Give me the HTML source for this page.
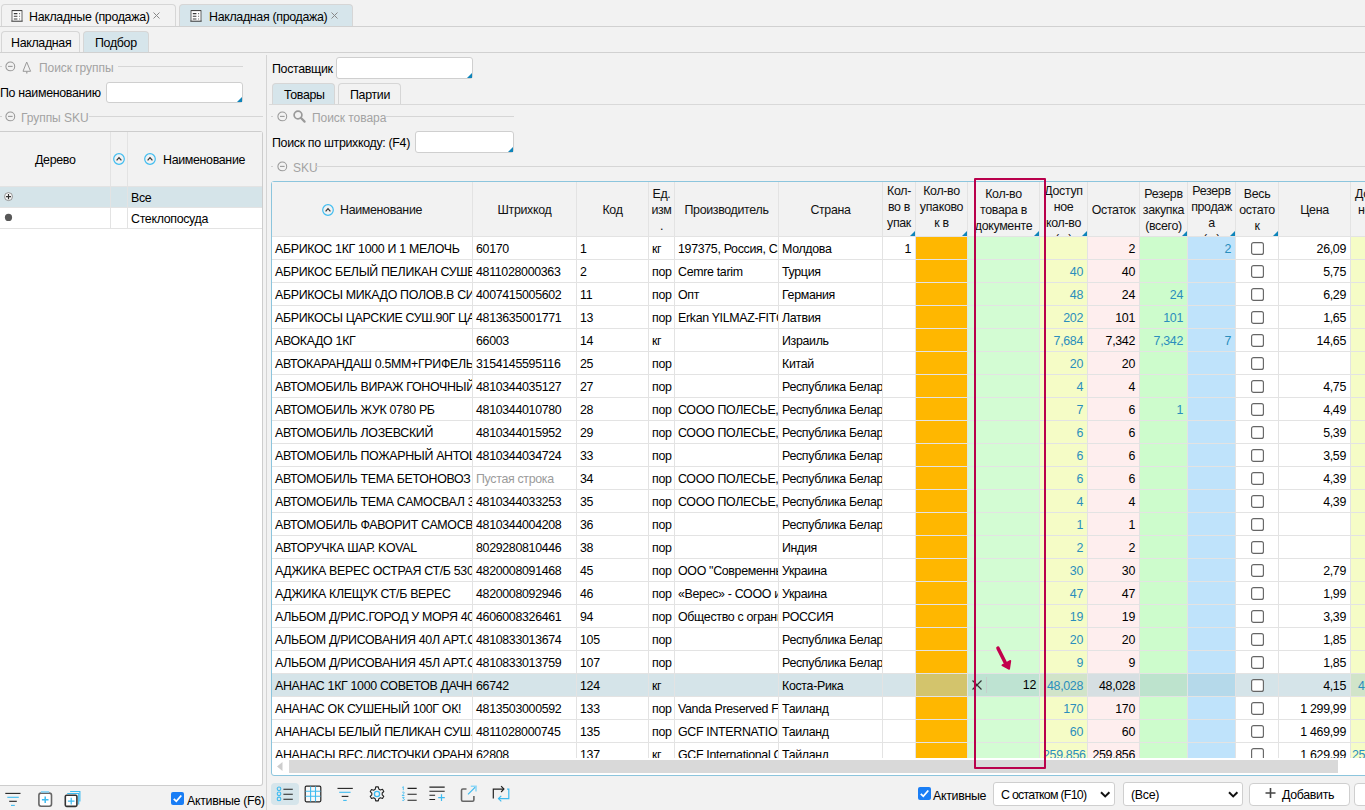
<!DOCTYPE html><html><head><meta charset="utf-8"><style>
html,body{margin:0;padding:0}
body{width:1365px;height:810px;overflow:hidden;position:relative;background:#f2f2f2;font-family:"Liberation Sans",sans-serif;font-size:12.4px;letter-spacing:-0.32px;color:#000}
.a{position:absolute;box-sizing:border-box}
.t{white-space:nowrap;line-height:16px}
.c{overflow:hidden;white-space:nowrap;line-height:22px;padding:1px 3px 0 3px}
.r{text-align:right;padding-right:4px}
.g{color:#9b9b9b}
.tm{color:#2a8ebd}
svg{position:absolute;overflow:visible}
</style></head><body>
<div class="a" style="left:1px;top:4px;width:175px;height:23px;border:1px solid #d6d6d6;border-bottom:none;border-radius:4px 4px 0 0;background:#f2f2f2"></div>
<svg style="left:11px;top:10px" width="12" height="12" viewBox="0 0 12 12"><path d="M1 11V0.5H11V11" fill="#fff" stroke="#555" stroke-width="0.9"/><path d="M0.3 11.2h11.4" stroke="#333" stroke-width="1"/><path d="M0.8 0.6h10.4" stroke="#444" stroke-width="1"/><path d="M2.8 3.6h3.6M2.8 6.3h3.6M2.8 9h3.6" stroke="#3a3a3a" stroke-width="1.1"/><path d="M8.1 3.6h1M8.1 6.3h1M8.1 9h1" stroke="#666" stroke-width="1.1"/></svg>
<div class="a t" style="left:29px;top:9px;">Накладные (продажа)</div>
<svg style="left:153px;top:12px" width="7" height="7" viewBox="0 0 7 7"><path d="M0.5 0.5L6.5 6.5M6.5 0.5L0.5 6.5" stroke="#888" stroke-width="1"/></svg>
<div class="a" style="left:179px;top:4px;width:174px;height:23px;border:1px solid #d6d6d6;border-bottom:none;border-radius:4px 4px 0 0;background:#d6e5eb"></div>
<svg style="left:190px;top:10px" width="12" height="12" viewBox="0 0 12 12"><path d="M1 11V0.5H11V11" fill="#fff" stroke="#555" stroke-width="0.9"/><path d="M0.3 11.2h11.4" stroke="#333" stroke-width="1"/><path d="M0.8 0.6h10.4" stroke="#444" stroke-width="1"/><path d="M2.8 3.6h3.6M2.8 6.3h3.6M2.8 9h3.6" stroke="#3a3a3a" stroke-width="1.1"/><path d="M8.1 3.6h1M8.1 6.3h1M8.1 9h1" stroke="#666" stroke-width="1.1"/></svg>
<div class="a t" style="left:209px;top:9px;">Накладная (продажа)</div>
<svg style="left:331px;top:12px" width="7" height="7" viewBox="0 0 7 7"><path d="M0.5 0.5L6.5 6.5M6.5 0.5L0.5 6.5" stroke="#888" stroke-width="1"/></svg>
<div class="a" style="left:0px;top:26px;width:1365px;height:1px;background:#d1d1d1"></div>
<div class="a" style="left:1px;top:31px;width:79px;height:22px;border:1px solid #d6d6d6;border-bottom:none;border-radius:4px 4px 0 0;background:#f2f2f2"></div>
<div class="a t" style="left:11px;top:35px;">Накладная</div>
<div class="a" style="left:83px;top:31px;width:66px;height:22px;border:1px solid #d6d6d6;border-bottom:none;border-radius:4px 4px 0 0;background:#d6e5eb"></div>
<div class="a t" style="left:95px;top:35px;">Подбор</div>
<div class="a" style="left:0px;top:52px;width:1365px;height:1px;background:#d1d1d1"></div>
<div class="a" style="left:266px;top:55px;width:1px;height:755px;background:#d4d4d4"></div>
<div class="a" style="left:0px;top:66px;width:2px;height:1px;background:#cfcfcf"></div>
<svg style="left:5px;top:61px" width="11" height="11" viewBox="0 0 11 11"><circle cx="5.3" cy="5.4" r="4.4" fill="none" stroke="#999" stroke-width="1.05"/><path d="M3 5.4h4.6" stroke="#999" stroke-width="1.1"/></svg>
<svg style="left:22px;top:61px" width="10" height="13" viewBox="0 0 10 13"><path d="M4.7 1L1 10.3H8.6Z" fill="none" stroke="#9a9a9a" stroke-width="1" stroke-linejoin="round"/><path d="M4.8 10.5V12.6" stroke="#9a9a9a" stroke-width="1.2"/></svg>
<div class="a t" style="left:39px;top:60px;color:#a3a3a3;font-size:12px;letter-spacing:-0.05px">Поиск группы</div>
<div class="a" style="left:118px;top:66px;width:125px;height:1px;background:#d6d6d6"></div>
<div class="a t" style="left:0px;top:85px;">По наименованию</div>
<div class="a" style="left:106px;top:82px;width:137px;height:21px;background:#fff;border:1px solid #cfcfcf;border-radius:3px"></div>
<svg style="left:237px;top:97px" width="5" height="5" viewBox="0 0 5 5"><path d="M5 0L5 5L0 5Z" fill="#0e84ba"/></svg>
<div class="a" style="left:0px;top:116px;width:2px;height:1px;background:#cfcfcf"></div>
<svg style="left:5px;top:111px" width="11" height="11" viewBox="0 0 11 11"><circle cx="5.3" cy="5.4" r="4.4" fill="none" stroke="#999" stroke-width="1.05"/><path d="M3 5.4h4.6" stroke="#999" stroke-width="1.1"/></svg>
<div class="a t" style="left:21px;top:110px;color:#a3a3a3;font-size:12px;letter-spacing:-0.05px">Группы SKU</div>
<div class="a" style="left:89px;top:116px;width:174px;height:1px;background:#d6d6d6"></div>
<div class="a" style="left:0px;top:131px;width:263px;height:655px;background:#fff;border:1px solid #cdcdcd;border-left:none;border-radius:0 3px 3px 0"></div>
<div class="a" style="left:0px;top:132px;width:262px;height:54px;background:#f2f2f2"></div>
<div class="a" style="left:0px;top:186px;width:262px;height:1px;background:#e3e3e3"></div>
<div class="a t" style="left:35px;top:152px;">Дерево</div>
<svg style="left:113px;top:153px" width="12" height="12" viewBox="0 0 12 12"><circle cx="6" cy="6" r="5.3" fill="none" stroke="#40bdf0" stroke-width="1.2"/><path d="M3.6 7.3L6 4.6L8.4 7.3" fill="none" stroke="#333" stroke-width="1.25"/></svg>
<svg style="left:144px;top:153px" width="12" height="12" viewBox="0 0 12 12"><circle cx="6" cy="6" r="5.3" fill="none" stroke="#40bdf0" stroke-width="1.2"/><path d="M3.6 7.3L6 4.6L8.4 7.3" fill="none" stroke="#333" stroke-width="1.25"/></svg>
<div class="a t" style="left:163px;top:152px;">Наименование</div>
<div class="a" style="left:0px;top:187px;width:262px;height:20px;background:#d5e4e9"></div>
<div class="a" style="left:0px;top:207px;width:262px;height:1px;background:#e3e3e3"></div>
<div class="a" style="left:110px;top:132px;width:1px;height:97px;background:#e3e3e3"></div>
<div class="a" style="left:127px;top:132px;width:1px;height:97px;background:#e3e3e3"></div>
<div class="a" style="left:0px;top:228px;width:262px;height:1px;background:#e3e3e3"></div>
<svg style="left:4px;top:192px" width="10" height="10" viewBox="0 0 10 10"><circle cx="4.5" cy="4.6" r="4" fill="#fafafa" stroke="#8a8a8a" stroke-width="0.9"/><path d="M1.9 4.6h5.2M4.5 2v5.2" stroke="#333" stroke-width="1.15"/></svg>
<svg style="left:4px;top:213px" width="9" height="9" viewBox="0 0 9 9"><circle cx="4.5" cy="4.4" r="3.6" fill="#585858"/></svg>
<div class="a t" style="left:131px;top:190px;">Все</div>
<div class="a t" style="left:131px;top:211px;">Стеклопосуда</div>
<svg style="left:5px;top:792px" width="16" height="15" viewBox="0 0 16 15"><path d="M0.3 1.4h15.2" stroke="#222" stroke-width="1.1"/><path d="M2.3 5.3h11.5" stroke="#3dbbf0" stroke-width="1.1"/><path d="M4.2 9.3h7.6" stroke="#222" stroke-width="1.1"/><path d="M6 13.4h3.8" stroke="#3dbbf0" stroke-width="1.1"/></svg>
<svg style="left:38px;top:790px" width="15" height="18" viewBox="0 0 15 18"><rect x="0.9" y="3.1" width="12.6" height="13.1" rx="2.2" fill="#fff" stroke="#666" stroke-width="1.6"/><path d="M2.9 1.9h8.2" stroke="#8fd6f5" stroke-width="1.8"/><path d="M7.2 6.4v6.6M3.9 9.7h6.6" stroke="#3dbbf0" stroke-width="1.5"/></svg>
<svg style="left:64px;top:790px" width="18" height="18" viewBox="0 0 18 18"><path d="M6.1 1.5H15.9V11.5" fill="none" stroke="#3dbbf0" stroke-width="1.1"/><path d="M3.2 3.5H14.7V14.5" fill="none" stroke="#3dbbf0" stroke-width="1.1"/><rect x="1.3" y="5.3" width="11.6" height="11.1" rx="1.3" fill="#fff" stroke="#333" stroke-width="1.6"/><path d="M7.2 7.8v6.6M3.9 11.1h6.6" stroke="#3dbbf0" stroke-width="1.2"/></svg>
<svg style="left:171px;top:792px" width="13" height="13" viewBox="0 0 13 13"><rect x="0" y="0" width="13" height="13" rx="2" fill="#1a7ef5"/><path d="M2.8 6.8L5.3 9.3L10.3 3.5" fill="none" stroke="#fff" stroke-width="1.8"/></svg>
<div class="a t" style="left:187px;top:793px;">Активные (F6)</div>
<div class="a t" style="left:272px;top:61px;">Поставщик</div>
<div class="a" style="left:336px;top:57px;width:137px;height:22px;background:#fff;border:1px solid #cfcfcf;border-radius:3px"></div>
<svg style="left:467px;top:73px" width="5" height="5" viewBox="0 0 5 5"><path d="M5 0L5 5L0 5Z" fill="#0e84ba"/></svg>
<div class="a" style="left:272px;top:83px;width:63px;height:22px;border:1px solid #d6d6d6;border-bottom:none;border-radius:4px 4px 0 0;background:#d6e5eb"></div>
<div class="a t" style="left:284px;top:87px;">Товары</div>
<div class="a" style="left:338px;top:83px;width:63px;height:22px;border:1px solid #d6d6d6;border-bottom:none;border-radius:4px 4px 0 0;background:#f2f2f2"></div>
<div class="a t" style="left:350px;top:87px;">Партии</div>
<div class="a" style="left:269px;top:104px;width:1096px;height:1px;background:#d9d9d9"></div>
<div class="a" style="left:271px;top:116px;width:2px;height:1px;background:#cfcfcf"></div>
<svg style="left:277px;top:111px" width="11" height="11" viewBox="0 0 11 11"><circle cx="5.3" cy="5.4" r="4.4" fill="none" stroke="#999" stroke-width="1.05"/><path d="M3 5.4h4.6" stroke="#999" stroke-width="1.1"/></svg>
<svg style="left:293px;top:110px" width="13" height="13" viewBox="0 0 13 13"><circle cx="5" cy="5" r="3.9" fill="none" stroke="#9a9a9a" stroke-width="1.7"/><path d="M7.8 7.8L11.6 11.6" stroke="#9a9a9a" stroke-width="2.2" stroke-linecap="round"/></svg>
<div class="a t" style="left:312px;top:110px;color:#a3a3a3;font-size:12px;letter-spacing:-0.05px">Поиск товара</div>
<div class="a" style="left:386px;top:116px;width:128px;height:1px;background:#d6d6d6"></div>
<div class="a t" style="left:272px;top:135px;">Поиск по штрихкоду: (F4)</div>
<div class="a" style="left:415px;top:131px;width:99px;height:22px;background:#fff;border:1px solid #cfcfcf;border-radius:3px"></div>
<svg style="left:508px;top:147px" width="5" height="5" viewBox="0 0 5 5"><path d="M5 0L5 5L0 5Z" fill="#0e84ba"/></svg>
<div class="a" style="left:271px;top:166px;width:2px;height:1px;background:#cfcfcf"></div>
<svg style="left:277px;top:161px" width="11" height="11" viewBox="0 0 11 11"><circle cx="5.3" cy="5.4" r="4.4" fill="none" stroke="#999" stroke-width="1.05"/><path d="M3 5.4h4.6" stroke="#999" stroke-width="1.1"/></svg>
<div class="a t" style="left:293px;top:160px;color:#a3a3a3;font-size:12px;letter-spacing:-0.05px">SKU</div>
<div class="a" style="left:316px;top:166px;width:1049px;height:1px;background:#d6d6d6"></div>
<div class="a" style="left:271px;top:181px;width:1104px;height:595px;border:1px solid #8cc5dd;border-radius:3px;background:#fff"></div>
<div class="a" style="left:272px;top:182px;width:1365px;height:54px;background:#f2f2f2"></div>
<div class="a" style="left:272px;top:236px;width:1365px;height:1px;background:#e3e3e3"></div>
<div class="a" style="left:272px;top:237px;width:1093px;height:521px;overflow:hidden">
<div class="a c" style="left:0px;top:0px;width:200px;height:22px;background:#fff;">АБРИКОС 1КГ 1000 И 1 МЕЛОЧЬ</div>
<div class="a c" style="left:201px;top:0px;width:103px;height:22px;background:#fff;">60170</div>
<div class="a c" style="left:305px;top:0px;width:71px;height:22px;background:#fff;">1</div>
<div class="a c" style="left:377px;top:0px;width:25px;height:22px;background:#fff;">кг</div>
<div class="a c" style="left:403px;top:0px;width:103px;height:22px;background:#fff;">197375, Россия, Санкт-Петербург</div>
<div class="a c" style="left:507px;top:0px;width:103px;height:22px;background:#fff;">Молдова</div>
<div class="a c r" style="left:611px;top:0px;width:32px;height:22px;background:#fff;">1</div>
<div class="a c" style="left:644px;top:0px;width:51px;height:22px;background:#ffb700;"></div>
<div class="a c" style="left:696px;top:0px;width:71px;height:22px;background:#d3fcd3;"></div>
<div class="a c r" style="left:768px;top:0px;width:47px;height:22px;background:#f5fcc6;color:#2a8ebd;"></div>
<div class="a c r" style="left:816px;top:0px;width:51px;height:22px;background:#feeeee;">2</div>
<div class="a c r" style="left:868px;top:0px;width:47px;height:22px;background:#cdfccc;color:#2a8ebd;"></div>
<div class="a c r" style="left:916px;top:0px;width:47px;height:22px;background:#bfe3fb;color:#2a8ebd;">2</div>
<div class="a c" style="left:964px;top:0px;width:42px;height:22px;background:#fff;"><svg style="left:15px;top:5px" width="13" height="13" viewBox="0 0 13 13"><rect x="0.6" y="0.6" width="11.8" height="11.8" rx="2" fill="#fff" stroke="#666" stroke-width="1.15"/></svg></div>
<div class="a c r" style="left:1007px;top:0px;width:71px;height:22px;background:#fff;">26,09</div>
<div class="a c" style="left:1079px;top:0px;width:49px;height:22px;background:#f5fcc6;color:#2a8ebd;padding-left:1px;"></div>
<div class="a" style="left:0;top:22px;width:1200px;height:1px;background:#e3e3e3"></div>
<div class="a c" style="left:0px;top:23px;width:200px;height:22px;background:#fff;">АБРИКОС БЕЛЫЙ ПЕЛИКАН СУШЕНЫЕ</div>
<div class="a c" style="left:201px;top:23px;width:103px;height:22px;background:#fff;">4811028000363</div>
<div class="a c" style="left:305px;top:23px;width:71px;height:22px;background:#fff;">2</div>
<div class="a c" style="left:377px;top:23px;width:25px;height:22px;background:#fff;">пор</div>
<div class="a c" style="left:403px;top:23px;width:103px;height:22px;background:#fff;">Cemre tarim</div>
<div class="a c" style="left:507px;top:23px;width:103px;height:22px;background:#fff;">Турция</div>
<div class="a c r" style="left:611px;top:23px;width:32px;height:22px;background:#fff;"></div>
<div class="a c" style="left:644px;top:23px;width:51px;height:22px;background:#ffb700;"></div>
<div class="a c" style="left:696px;top:23px;width:71px;height:22px;background:#d3fcd3;"></div>
<div class="a c r" style="left:768px;top:23px;width:47px;height:22px;background:#f5fcc6;color:#2a8ebd;">40</div>
<div class="a c r" style="left:816px;top:23px;width:51px;height:22px;background:#feeeee;">40</div>
<div class="a c r" style="left:868px;top:23px;width:47px;height:22px;background:#cdfccc;color:#2a8ebd;"></div>
<div class="a c r" style="left:916px;top:23px;width:47px;height:22px;background:#bfe3fb;color:#2a8ebd;"></div>
<div class="a c" style="left:964px;top:23px;width:42px;height:22px;background:#fff;"><svg style="left:15px;top:5px" width="13" height="13" viewBox="0 0 13 13"><rect x="0.6" y="0.6" width="11.8" height="11.8" rx="2" fill="#fff" stroke="#666" stroke-width="1.15"/></svg></div>
<div class="a c r" style="left:1007px;top:23px;width:71px;height:22px;background:#fff;">5,75</div>
<div class="a c" style="left:1079px;top:23px;width:49px;height:22px;background:#f5fcc6;color:#2a8ebd;padding-left:1px;"></div>
<div class="a" style="left:0;top:45px;width:1200px;height:1px;background:#e3e3e3"></div>
<div class="a c" style="left:0px;top:46px;width:200px;height:22px;background:#fff;">АБРИКОСЫ МИКАДО ПОЛОВ.В СИРОПЕ</div>
<div class="a c" style="left:201px;top:46px;width:103px;height:22px;background:#fff;">4007415005602</div>
<div class="a c" style="left:305px;top:46px;width:71px;height:22px;background:#fff;">11</div>
<div class="a c" style="left:377px;top:46px;width:25px;height:22px;background:#fff;">пор</div>
<div class="a c" style="left:403px;top:46px;width:103px;height:22px;background:#fff;">Опт</div>
<div class="a c" style="left:507px;top:46px;width:103px;height:22px;background:#fff;">Германия</div>
<div class="a c r" style="left:611px;top:46px;width:32px;height:22px;background:#fff;"></div>
<div class="a c" style="left:644px;top:46px;width:51px;height:22px;background:#ffb700;"></div>
<div class="a c" style="left:696px;top:46px;width:71px;height:22px;background:#d3fcd3;"></div>
<div class="a c r" style="left:768px;top:46px;width:47px;height:22px;background:#f5fcc6;color:#2a8ebd;">48</div>
<div class="a c r" style="left:816px;top:46px;width:51px;height:22px;background:#feeeee;">24</div>
<div class="a c r" style="left:868px;top:46px;width:47px;height:22px;background:#cdfccc;color:#2a8ebd;">24</div>
<div class="a c r" style="left:916px;top:46px;width:47px;height:22px;background:#bfe3fb;color:#2a8ebd;"></div>
<div class="a c" style="left:964px;top:46px;width:42px;height:22px;background:#fff;"><svg style="left:15px;top:5px" width="13" height="13" viewBox="0 0 13 13"><rect x="0.6" y="0.6" width="11.8" height="11.8" rx="2" fill="#fff" stroke="#666" stroke-width="1.15"/></svg></div>
<div class="a c r" style="left:1007px;top:46px;width:71px;height:22px;background:#fff;">6,29</div>
<div class="a c" style="left:1079px;top:46px;width:49px;height:22px;background:#f5fcc6;color:#2a8ebd;padding-left:1px;"></div>
<div class="a" style="left:0;top:68px;width:1200px;height:1px;background:#e3e3e3"></div>
<div class="a c" style="left:0px;top:69px;width:200px;height:22px;background:#fff;">АБРИКОСЫ ЦАРСКИЕ СУШ.90Г ЦАРСКИЙ</div>
<div class="a c" style="left:201px;top:69px;width:103px;height:22px;background:#fff;">4813635001771</div>
<div class="a c" style="left:305px;top:69px;width:71px;height:22px;background:#fff;">13</div>
<div class="a c" style="left:377px;top:69px;width:25px;height:22px;background:#fff;">пор</div>
<div class="a c" style="left:403px;top:69px;width:103px;height:22px;background:#fff;">Erkan YILMAZ-FITCO</div>
<div class="a c" style="left:507px;top:69px;width:103px;height:22px;background:#fff;">Латвия</div>
<div class="a c r" style="left:611px;top:69px;width:32px;height:22px;background:#fff;"></div>
<div class="a c" style="left:644px;top:69px;width:51px;height:22px;background:#ffb700;"></div>
<div class="a c" style="left:696px;top:69px;width:71px;height:22px;background:#d3fcd3;"></div>
<div class="a c r" style="left:768px;top:69px;width:47px;height:22px;background:#f5fcc6;color:#2a8ebd;">202</div>
<div class="a c r" style="left:816px;top:69px;width:51px;height:22px;background:#feeeee;">101</div>
<div class="a c r" style="left:868px;top:69px;width:47px;height:22px;background:#cdfccc;color:#2a8ebd;">101</div>
<div class="a c r" style="left:916px;top:69px;width:47px;height:22px;background:#bfe3fb;color:#2a8ebd;"></div>
<div class="a c" style="left:964px;top:69px;width:42px;height:22px;background:#fff;"><svg style="left:15px;top:5px" width="13" height="13" viewBox="0 0 13 13"><rect x="0.6" y="0.6" width="11.8" height="11.8" rx="2" fill="#fff" stroke="#666" stroke-width="1.15"/></svg></div>
<div class="a c r" style="left:1007px;top:69px;width:71px;height:22px;background:#fff;">1,65</div>
<div class="a c" style="left:1079px;top:69px;width:49px;height:22px;background:#f5fcc6;color:#2a8ebd;padding-left:1px;"></div>
<div class="a" style="left:0;top:91px;width:1200px;height:1px;background:#e3e3e3"></div>
<div class="a c" style="left:0px;top:92px;width:200px;height:22px;background:#fff;">АВОКАДО 1КГ</div>
<div class="a c" style="left:201px;top:92px;width:103px;height:22px;background:#fff;">66003</div>
<div class="a c" style="left:305px;top:92px;width:71px;height:22px;background:#fff;">14</div>
<div class="a c" style="left:377px;top:92px;width:25px;height:22px;background:#fff;">кг</div>
<div class="a c" style="left:403px;top:92px;width:103px;height:22px;background:#fff;"></div>
<div class="a c" style="left:507px;top:92px;width:103px;height:22px;background:#fff;">Израиль</div>
<div class="a c r" style="left:611px;top:92px;width:32px;height:22px;background:#fff;"></div>
<div class="a c" style="left:644px;top:92px;width:51px;height:22px;background:#ffb700;"></div>
<div class="a c" style="left:696px;top:92px;width:71px;height:22px;background:#d3fcd3;"></div>
<div class="a c r" style="left:768px;top:92px;width:47px;height:22px;background:#f5fcc6;color:#2a8ebd;">7,684</div>
<div class="a c r" style="left:816px;top:92px;width:51px;height:22px;background:#feeeee;">7,342</div>
<div class="a c r" style="left:868px;top:92px;width:47px;height:22px;background:#cdfccc;color:#2a8ebd;">7,342</div>
<div class="a c r" style="left:916px;top:92px;width:47px;height:22px;background:#bfe3fb;color:#2a8ebd;">7</div>
<div class="a c" style="left:964px;top:92px;width:42px;height:22px;background:#fff;"><svg style="left:15px;top:5px" width="13" height="13" viewBox="0 0 13 13"><rect x="0.6" y="0.6" width="11.8" height="11.8" rx="2" fill="#fff" stroke="#666" stroke-width="1.15"/></svg></div>
<div class="a c r" style="left:1007px;top:92px;width:71px;height:22px;background:#fff;">14,65</div>
<div class="a c" style="left:1079px;top:92px;width:49px;height:22px;background:#f5fcc6;color:#2a8ebd;padding-left:1px;"></div>
<div class="a" style="left:0;top:114px;width:1200px;height:1px;background:#e3e3e3"></div>
<div class="a c" style="left:0px;top:115px;width:200px;height:22px;background:#fff;">АВТОКАРАНДАШ 0.5ММ+ГРИФЕЛЬ</div>
<div class="a c" style="left:201px;top:115px;width:103px;height:22px;background:#fff;">3154145595116</div>
<div class="a c" style="left:305px;top:115px;width:71px;height:22px;background:#fff;">25</div>
<div class="a c" style="left:377px;top:115px;width:25px;height:22px;background:#fff;">пор</div>
<div class="a c" style="left:403px;top:115px;width:103px;height:22px;background:#fff;"></div>
<div class="a c" style="left:507px;top:115px;width:103px;height:22px;background:#fff;">Китай</div>
<div class="a c r" style="left:611px;top:115px;width:32px;height:22px;background:#fff;"></div>
<div class="a c" style="left:644px;top:115px;width:51px;height:22px;background:#ffb700;"></div>
<div class="a c" style="left:696px;top:115px;width:71px;height:22px;background:#d3fcd3;"></div>
<div class="a c r" style="left:768px;top:115px;width:47px;height:22px;background:#f5fcc6;color:#2a8ebd;">20</div>
<div class="a c r" style="left:816px;top:115px;width:51px;height:22px;background:#feeeee;">20</div>
<div class="a c r" style="left:868px;top:115px;width:47px;height:22px;background:#cdfccc;color:#2a8ebd;"></div>
<div class="a c r" style="left:916px;top:115px;width:47px;height:22px;background:#bfe3fb;color:#2a8ebd;"></div>
<div class="a c" style="left:964px;top:115px;width:42px;height:22px;background:#fff;"><svg style="left:15px;top:5px" width="13" height="13" viewBox="0 0 13 13"><rect x="0.6" y="0.6" width="11.8" height="11.8" rx="2" fill="#fff" stroke="#666" stroke-width="1.15"/></svg></div>
<div class="a c r" style="left:1007px;top:115px;width:71px;height:22px;background:#fff;"></div>
<div class="a c" style="left:1079px;top:115px;width:49px;height:22px;background:#f5fcc6;color:#2a8ebd;padding-left:1px;"></div>
<div class="a" style="left:0;top:137px;width:1200px;height:1px;background:#e3e3e3"></div>
<div class="a c" style="left:0px;top:138px;width:200px;height:22px;background:#fff;">АВТОМОБИЛЬ ВИРАЖ ГОНОЧНЫЙ</div>
<div class="a c" style="left:201px;top:138px;width:103px;height:22px;background:#fff;">4810344035127</div>
<div class="a c" style="left:305px;top:138px;width:71px;height:22px;background:#fff;">27</div>
<div class="a c" style="left:377px;top:138px;width:25px;height:22px;background:#fff;">пор</div>
<div class="a c" style="left:403px;top:138px;width:103px;height:22px;background:#fff;"></div>
<div class="a c" style="left:507px;top:138px;width:103px;height:22px;background:#fff;">Республика Беларусь</div>
<div class="a c r" style="left:611px;top:138px;width:32px;height:22px;background:#fff;"></div>
<div class="a c" style="left:644px;top:138px;width:51px;height:22px;background:#ffb700;"></div>
<div class="a c" style="left:696px;top:138px;width:71px;height:22px;background:#d3fcd3;"></div>
<div class="a c r" style="left:768px;top:138px;width:47px;height:22px;background:#f5fcc6;color:#2a8ebd;">4</div>
<div class="a c r" style="left:816px;top:138px;width:51px;height:22px;background:#feeeee;">4</div>
<div class="a c r" style="left:868px;top:138px;width:47px;height:22px;background:#cdfccc;color:#2a8ebd;"></div>
<div class="a c r" style="left:916px;top:138px;width:47px;height:22px;background:#bfe3fb;color:#2a8ebd;"></div>
<div class="a c" style="left:964px;top:138px;width:42px;height:22px;background:#fff;"><svg style="left:15px;top:5px" width="13" height="13" viewBox="0 0 13 13"><rect x="0.6" y="0.6" width="11.8" height="11.8" rx="2" fill="#fff" stroke="#666" stroke-width="1.15"/></svg></div>
<div class="a c r" style="left:1007px;top:138px;width:71px;height:22px;background:#fff;">4,75</div>
<div class="a c" style="left:1079px;top:138px;width:49px;height:22px;background:#f5fcc6;color:#2a8ebd;padding-left:1px;"></div>
<div class="a" style="left:0;top:160px;width:1200px;height:1px;background:#e3e3e3"></div>
<div class="a c" style="left:0px;top:161px;width:200px;height:22px;background:#fff;">АВТОМОБИЛЬ ЖУК 0780 РБ</div>
<div class="a c" style="left:201px;top:161px;width:103px;height:22px;background:#fff;">4810344010780</div>
<div class="a c" style="left:305px;top:161px;width:71px;height:22px;background:#fff;">28</div>
<div class="a c" style="left:377px;top:161px;width:25px;height:22px;background:#fff;">пор</div>
<div class="a c" style="left:403px;top:161px;width:103px;height:22px;background:#fff;">СООО ПОЛЕСЬЕ, РБ</div>
<div class="a c" style="left:507px;top:161px;width:103px;height:22px;background:#fff;">Республика Беларусь</div>
<div class="a c r" style="left:611px;top:161px;width:32px;height:22px;background:#fff;"></div>
<div class="a c" style="left:644px;top:161px;width:51px;height:22px;background:#ffb700;"></div>
<div class="a c" style="left:696px;top:161px;width:71px;height:22px;background:#d3fcd3;"></div>
<div class="a c r" style="left:768px;top:161px;width:47px;height:22px;background:#f5fcc6;color:#2a8ebd;">7</div>
<div class="a c r" style="left:816px;top:161px;width:51px;height:22px;background:#feeeee;">6</div>
<div class="a c r" style="left:868px;top:161px;width:47px;height:22px;background:#cdfccc;color:#2a8ebd;">1</div>
<div class="a c r" style="left:916px;top:161px;width:47px;height:22px;background:#bfe3fb;color:#2a8ebd;"></div>
<div class="a c" style="left:964px;top:161px;width:42px;height:22px;background:#fff;"><svg style="left:15px;top:5px" width="13" height="13" viewBox="0 0 13 13"><rect x="0.6" y="0.6" width="11.8" height="11.8" rx="2" fill="#fff" stroke="#666" stroke-width="1.15"/></svg></div>
<div class="a c r" style="left:1007px;top:161px;width:71px;height:22px;background:#fff;">4,49</div>
<div class="a c" style="left:1079px;top:161px;width:49px;height:22px;background:#f5fcc6;color:#2a8ebd;padding-left:1px;"></div>
<div class="a" style="left:0;top:183px;width:1200px;height:1px;background:#e3e3e3"></div>
<div class="a c" style="left:0px;top:184px;width:200px;height:22px;background:#fff;">АВТОМОБИЛЬ ЛОЗЕВСКИЙ</div>
<div class="a c" style="left:201px;top:184px;width:103px;height:22px;background:#fff;">4810344015952</div>
<div class="a c" style="left:305px;top:184px;width:71px;height:22px;background:#fff;">29</div>
<div class="a c" style="left:377px;top:184px;width:25px;height:22px;background:#fff;">пор</div>
<div class="a c" style="left:403px;top:184px;width:103px;height:22px;background:#fff;">СООО ПОЛЕСЬЕ, РБ</div>
<div class="a c" style="left:507px;top:184px;width:103px;height:22px;background:#fff;">Республика Беларусь</div>
<div class="a c r" style="left:611px;top:184px;width:32px;height:22px;background:#fff;"></div>
<div class="a c" style="left:644px;top:184px;width:51px;height:22px;background:#ffb700;"></div>
<div class="a c" style="left:696px;top:184px;width:71px;height:22px;background:#d3fcd3;"></div>
<div class="a c r" style="left:768px;top:184px;width:47px;height:22px;background:#f5fcc6;color:#2a8ebd;">6</div>
<div class="a c r" style="left:816px;top:184px;width:51px;height:22px;background:#feeeee;">6</div>
<div class="a c r" style="left:868px;top:184px;width:47px;height:22px;background:#cdfccc;color:#2a8ebd;"></div>
<div class="a c r" style="left:916px;top:184px;width:47px;height:22px;background:#bfe3fb;color:#2a8ebd;"></div>
<div class="a c" style="left:964px;top:184px;width:42px;height:22px;background:#fff;"><svg style="left:15px;top:5px" width="13" height="13" viewBox="0 0 13 13"><rect x="0.6" y="0.6" width="11.8" height="11.8" rx="2" fill="#fff" stroke="#666" stroke-width="1.15"/></svg></div>
<div class="a c r" style="left:1007px;top:184px;width:71px;height:22px;background:#fff;">5,39</div>
<div class="a c" style="left:1079px;top:184px;width:49px;height:22px;background:#f5fcc6;color:#2a8ebd;padding-left:1px;"></div>
<div class="a" style="left:0;top:206px;width:1200px;height:1px;background:#e3e3e3"></div>
<div class="a c" style="left:0px;top:207px;width:200px;height:22px;background:#fff;">АВТОМОБИЛЬ ПОЖАРНЫЙ АНТОШКА</div>
<div class="a c" style="left:201px;top:207px;width:103px;height:22px;background:#fff;">4810344034724</div>
<div class="a c" style="left:305px;top:207px;width:71px;height:22px;background:#fff;">33</div>
<div class="a c" style="left:377px;top:207px;width:25px;height:22px;background:#fff;">пор</div>
<div class="a c" style="left:403px;top:207px;width:103px;height:22px;background:#fff;"></div>
<div class="a c" style="left:507px;top:207px;width:103px;height:22px;background:#fff;">Республика Беларусь</div>
<div class="a c r" style="left:611px;top:207px;width:32px;height:22px;background:#fff;"></div>
<div class="a c" style="left:644px;top:207px;width:51px;height:22px;background:#ffb700;"></div>
<div class="a c" style="left:696px;top:207px;width:71px;height:22px;background:#d3fcd3;"></div>
<div class="a c r" style="left:768px;top:207px;width:47px;height:22px;background:#f5fcc6;color:#2a8ebd;">6</div>
<div class="a c r" style="left:816px;top:207px;width:51px;height:22px;background:#feeeee;">6</div>
<div class="a c r" style="left:868px;top:207px;width:47px;height:22px;background:#cdfccc;color:#2a8ebd;"></div>
<div class="a c r" style="left:916px;top:207px;width:47px;height:22px;background:#bfe3fb;color:#2a8ebd;"></div>
<div class="a c" style="left:964px;top:207px;width:42px;height:22px;background:#fff;"><svg style="left:15px;top:5px" width="13" height="13" viewBox="0 0 13 13"><rect x="0.6" y="0.6" width="11.8" height="11.8" rx="2" fill="#fff" stroke="#666" stroke-width="1.15"/></svg></div>
<div class="a c r" style="left:1007px;top:207px;width:71px;height:22px;background:#fff;">3,59</div>
<div class="a c" style="left:1079px;top:207px;width:49px;height:22px;background:#f5fcc6;color:#2a8ebd;padding-left:1px;"></div>
<div class="a" style="left:0;top:229px;width:1200px;height:1px;background:#e3e3e3"></div>
<div class="a c" style="left:0px;top:230px;width:200px;height:22px;background:#fff;">АВТОМОБИЛЬ ТЕМА БЕТОНОВОЗ 3</div>
<div class="a c" style="left:201px;top:230px;width:103px;height:22px;background:#fff;"><span class="g">Пустая строка</span></div>
<div class="a c" style="left:305px;top:230px;width:71px;height:22px;background:#fff;">34</div>
<div class="a c" style="left:377px;top:230px;width:25px;height:22px;background:#fff;">пор</div>
<div class="a c" style="left:403px;top:230px;width:103px;height:22px;background:#fff;">СООО ПОЛЕСЬЕ, РБ</div>
<div class="a c" style="left:507px;top:230px;width:103px;height:22px;background:#fff;">Республика Беларусь</div>
<div class="a c r" style="left:611px;top:230px;width:32px;height:22px;background:#fff;"></div>
<div class="a c" style="left:644px;top:230px;width:51px;height:22px;background:#ffb700;"></div>
<div class="a c" style="left:696px;top:230px;width:71px;height:22px;background:#d3fcd3;"></div>
<div class="a c r" style="left:768px;top:230px;width:47px;height:22px;background:#f5fcc6;color:#2a8ebd;">6</div>
<div class="a c r" style="left:816px;top:230px;width:51px;height:22px;background:#feeeee;">6</div>
<div class="a c r" style="left:868px;top:230px;width:47px;height:22px;background:#cdfccc;color:#2a8ebd;"></div>
<div class="a c r" style="left:916px;top:230px;width:47px;height:22px;background:#bfe3fb;color:#2a8ebd;"></div>
<div class="a c" style="left:964px;top:230px;width:42px;height:22px;background:#fff;"><svg style="left:15px;top:5px" width="13" height="13" viewBox="0 0 13 13"><rect x="0.6" y="0.6" width="11.8" height="11.8" rx="2" fill="#fff" stroke="#666" stroke-width="1.15"/></svg></div>
<div class="a c r" style="left:1007px;top:230px;width:71px;height:22px;background:#fff;">4,39</div>
<div class="a c" style="left:1079px;top:230px;width:49px;height:22px;background:#f5fcc6;color:#2a8ebd;padding-left:1px;"></div>
<div class="a" style="left:0;top:252px;width:1200px;height:1px;background:#e3e3e3"></div>
<div class="a c" style="left:0px;top:253px;width:200px;height:22px;background:#fff;">АВТОМОБИЛЬ ТЕМА САМОСВАЛ 32</div>
<div class="a c" style="left:201px;top:253px;width:103px;height:22px;background:#fff;">4810344033253</div>
<div class="a c" style="left:305px;top:253px;width:71px;height:22px;background:#fff;">35</div>
<div class="a c" style="left:377px;top:253px;width:25px;height:22px;background:#fff;">пор</div>
<div class="a c" style="left:403px;top:253px;width:103px;height:22px;background:#fff;">СООО ПОЛЕСЬЕ, РБ</div>
<div class="a c" style="left:507px;top:253px;width:103px;height:22px;background:#fff;">Республика Беларусь</div>
<div class="a c r" style="left:611px;top:253px;width:32px;height:22px;background:#fff;"></div>
<div class="a c" style="left:644px;top:253px;width:51px;height:22px;background:#ffb700;"></div>
<div class="a c" style="left:696px;top:253px;width:71px;height:22px;background:#d3fcd3;"></div>
<div class="a c r" style="left:768px;top:253px;width:47px;height:22px;background:#f5fcc6;color:#2a8ebd;">4</div>
<div class="a c r" style="left:816px;top:253px;width:51px;height:22px;background:#feeeee;">4</div>
<div class="a c r" style="left:868px;top:253px;width:47px;height:22px;background:#cdfccc;color:#2a8ebd;"></div>
<div class="a c r" style="left:916px;top:253px;width:47px;height:22px;background:#bfe3fb;color:#2a8ebd;"></div>
<div class="a c" style="left:964px;top:253px;width:42px;height:22px;background:#fff;"><svg style="left:15px;top:5px" width="13" height="13" viewBox="0 0 13 13"><rect x="0.6" y="0.6" width="11.8" height="11.8" rx="2" fill="#fff" stroke="#666" stroke-width="1.15"/></svg></div>
<div class="a c r" style="left:1007px;top:253px;width:71px;height:22px;background:#fff;">4,39</div>
<div class="a c" style="left:1079px;top:253px;width:49px;height:22px;background:#f5fcc6;color:#2a8ebd;padding-left:1px;"></div>
<div class="a" style="left:0;top:275px;width:1200px;height:1px;background:#e3e3e3"></div>
<div class="a c" style="left:0px;top:276px;width:200px;height:22px;background:#fff;">АВТОМОБИЛЬ ФАВОРИТ САМОСВАЛ</div>
<div class="a c" style="left:201px;top:276px;width:103px;height:22px;background:#fff;">4810344004208</div>
<div class="a c" style="left:305px;top:276px;width:71px;height:22px;background:#fff;">36</div>
<div class="a c" style="left:377px;top:276px;width:25px;height:22px;background:#fff;">пор</div>
<div class="a c" style="left:403px;top:276px;width:103px;height:22px;background:#fff;"></div>
<div class="a c" style="left:507px;top:276px;width:103px;height:22px;background:#fff;">Республика Беларусь</div>
<div class="a c r" style="left:611px;top:276px;width:32px;height:22px;background:#fff;"></div>
<div class="a c" style="left:644px;top:276px;width:51px;height:22px;background:#ffb700;"></div>
<div class="a c" style="left:696px;top:276px;width:71px;height:22px;background:#d3fcd3;"></div>
<div class="a c r" style="left:768px;top:276px;width:47px;height:22px;background:#f5fcc6;color:#2a8ebd;">1</div>
<div class="a c r" style="left:816px;top:276px;width:51px;height:22px;background:#feeeee;">1</div>
<div class="a c r" style="left:868px;top:276px;width:47px;height:22px;background:#cdfccc;color:#2a8ebd;"></div>
<div class="a c r" style="left:916px;top:276px;width:47px;height:22px;background:#bfe3fb;color:#2a8ebd;"></div>
<div class="a c" style="left:964px;top:276px;width:42px;height:22px;background:#fff;"><svg style="left:15px;top:5px" width="13" height="13" viewBox="0 0 13 13"><rect x="0.6" y="0.6" width="11.8" height="11.8" rx="2" fill="#fff" stroke="#666" stroke-width="1.15"/></svg></div>
<div class="a c r" style="left:1007px;top:276px;width:71px;height:22px;background:#fff;"></div>
<div class="a c" style="left:1079px;top:276px;width:49px;height:22px;background:#f5fcc6;color:#2a8ebd;padding-left:1px;"></div>
<div class="a" style="left:0;top:298px;width:1200px;height:1px;background:#e3e3e3"></div>
<div class="a c" style="left:0px;top:299px;width:200px;height:22px;background:#fff;">АВТОРУЧКА ШАР. KOVAL</div>
<div class="a c" style="left:201px;top:299px;width:103px;height:22px;background:#fff;">8029280810446</div>
<div class="a c" style="left:305px;top:299px;width:71px;height:22px;background:#fff;">38</div>
<div class="a c" style="left:377px;top:299px;width:25px;height:22px;background:#fff;">пор</div>
<div class="a c" style="left:403px;top:299px;width:103px;height:22px;background:#fff;"></div>
<div class="a c" style="left:507px;top:299px;width:103px;height:22px;background:#fff;">Индия</div>
<div class="a c r" style="left:611px;top:299px;width:32px;height:22px;background:#fff;"></div>
<div class="a c" style="left:644px;top:299px;width:51px;height:22px;background:#ffb700;"></div>
<div class="a c" style="left:696px;top:299px;width:71px;height:22px;background:#d3fcd3;"></div>
<div class="a c r" style="left:768px;top:299px;width:47px;height:22px;background:#f5fcc6;color:#2a8ebd;">2</div>
<div class="a c r" style="left:816px;top:299px;width:51px;height:22px;background:#feeeee;">2</div>
<div class="a c r" style="left:868px;top:299px;width:47px;height:22px;background:#cdfccc;color:#2a8ebd;"></div>
<div class="a c r" style="left:916px;top:299px;width:47px;height:22px;background:#bfe3fb;color:#2a8ebd;"></div>
<div class="a c" style="left:964px;top:299px;width:42px;height:22px;background:#fff;"><svg style="left:15px;top:5px" width="13" height="13" viewBox="0 0 13 13"><rect x="0.6" y="0.6" width="11.8" height="11.8" rx="2" fill="#fff" stroke="#666" stroke-width="1.15"/></svg></div>
<div class="a c r" style="left:1007px;top:299px;width:71px;height:22px;background:#fff;"></div>
<div class="a c" style="left:1079px;top:299px;width:49px;height:22px;background:#f5fcc6;color:#2a8ebd;padding-left:1px;"></div>
<div class="a" style="left:0;top:321px;width:1200px;height:1px;background:#e3e3e3"></div>
<div class="a c" style="left:0px;top:322px;width:200px;height:22px;background:#fff;">АДЖИКА ВЕРЕС ОСТРАЯ СТ/Б 530Г ВЕРЕС</div>
<div class="a c" style="left:201px;top:322px;width:103px;height:22px;background:#fff;">4820008091468</div>
<div class="a c" style="left:305px;top:322px;width:71px;height:22px;background:#fff;">45</div>
<div class="a c" style="left:377px;top:322px;width:25px;height:22px;background:#fff;">пор</div>
<div class="a c" style="left:403px;top:322px;width:103px;height:22px;background:#fff;">ООО &quot;Современные технологии&quot;</div>
<div class="a c" style="left:507px;top:322px;width:103px;height:22px;background:#fff;">Украина</div>
<div class="a c r" style="left:611px;top:322px;width:32px;height:22px;background:#fff;"></div>
<div class="a c" style="left:644px;top:322px;width:51px;height:22px;background:#ffb700;"></div>
<div class="a c" style="left:696px;top:322px;width:71px;height:22px;background:#d3fcd3;"></div>
<div class="a c r" style="left:768px;top:322px;width:47px;height:22px;background:#f5fcc6;color:#2a8ebd;">30</div>
<div class="a c r" style="left:816px;top:322px;width:51px;height:22px;background:#feeeee;">30</div>
<div class="a c r" style="left:868px;top:322px;width:47px;height:22px;background:#cdfccc;color:#2a8ebd;"></div>
<div class="a c r" style="left:916px;top:322px;width:47px;height:22px;background:#bfe3fb;color:#2a8ebd;"></div>
<div class="a c" style="left:964px;top:322px;width:42px;height:22px;background:#fff;"><svg style="left:15px;top:5px" width="13" height="13" viewBox="0 0 13 13"><rect x="0.6" y="0.6" width="11.8" height="11.8" rx="2" fill="#fff" stroke="#666" stroke-width="1.15"/></svg></div>
<div class="a c r" style="left:1007px;top:322px;width:71px;height:22px;background:#fff;">2,79</div>
<div class="a c" style="left:1079px;top:322px;width:49px;height:22px;background:#f5fcc6;color:#2a8ebd;padding-left:1px;"></div>
<div class="a" style="left:0;top:344px;width:1200px;height:1px;background:#e3e3e3"></div>
<div class="a c" style="left:0px;top:345px;width:200px;height:22px;background:#fff;">АДЖИКА КЛЕЩУК СТ/Б ВЕРЕС</div>
<div class="a c" style="left:201px;top:345px;width:103px;height:22px;background:#fff;">4820008092946</div>
<div class="a c" style="left:305px;top:345px;width:71px;height:22px;background:#fff;">46</div>
<div class="a c" style="left:377px;top:345px;width:25px;height:22px;background:#fff;">пор</div>
<div class="a c" style="left:403px;top:345px;width:103px;height:22px;background:#fff;">«Верес» - СООО и</div>
<div class="a c" style="left:507px;top:345px;width:103px;height:22px;background:#fff;">Украина</div>
<div class="a c r" style="left:611px;top:345px;width:32px;height:22px;background:#fff;"></div>
<div class="a c" style="left:644px;top:345px;width:51px;height:22px;background:#ffb700;"></div>
<div class="a c" style="left:696px;top:345px;width:71px;height:22px;background:#d3fcd3;"></div>
<div class="a c r" style="left:768px;top:345px;width:47px;height:22px;background:#f5fcc6;color:#2a8ebd;">47</div>
<div class="a c r" style="left:816px;top:345px;width:51px;height:22px;background:#feeeee;">47</div>
<div class="a c r" style="left:868px;top:345px;width:47px;height:22px;background:#cdfccc;color:#2a8ebd;"></div>
<div class="a c r" style="left:916px;top:345px;width:47px;height:22px;background:#bfe3fb;color:#2a8ebd;"></div>
<div class="a c" style="left:964px;top:345px;width:42px;height:22px;background:#fff;"><svg style="left:15px;top:5px" width="13" height="13" viewBox="0 0 13 13"><rect x="0.6" y="0.6" width="11.8" height="11.8" rx="2" fill="#fff" stroke="#666" stroke-width="1.15"/></svg></div>
<div class="a c r" style="left:1007px;top:345px;width:71px;height:22px;background:#fff;">1,99</div>
<div class="a c" style="left:1079px;top:345px;width:49px;height:22px;background:#f5fcc6;color:#2a8ebd;padding-left:1px;"></div>
<div class="a" style="left:0;top:367px;width:1200px;height:1px;background:#e3e3e3"></div>
<div class="a c" style="left:0px;top:368px;width:200px;height:22px;background:#fff;">АЛЬБОМ Д/РИС.ГОРОД У МОРЯ 40Л</div>
<div class="a c" style="left:201px;top:368px;width:103px;height:22px;background:#fff;">4606008326461</div>
<div class="a c" style="left:305px;top:368px;width:71px;height:22px;background:#fff;">94</div>
<div class="a c" style="left:377px;top:368px;width:25px;height:22px;background:#fff;">пор</div>
<div class="a c" style="left:403px;top:368px;width:103px;height:22px;background:#fff;">Общество с ограниченной</div>
<div class="a c" style="left:507px;top:368px;width:103px;height:22px;background:#fff;">РОССИЯ</div>
<div class="a c r" style="left:611px;top:368px;width:32px;height:22px;background:#fff;"></div>
<div class="a c" style="left:644px;top:368px;width:51px;height:22px;background:#ffb700;"></div>
<div class="a c" style="left:696px;top:368px;width:71px;height:22px;background:#d3fcd3;"></div>
<div class="a c r" style="left:768px;top:368px;width:47px;height:22px;background:#f5fcc6;color:#2a8ebd;">19</div>
<div class="a c r" style="left:816px;top:368px;width:51px;height:22px;background:#feeeee;">19</div>
<div class="a c r" style="left:868px;top:368px;width:47px;height:22px;background:#cdfccc;color:#2a8ebd;"></div>
<div class="a c r" style="left:916px;top:368px;width:47px;height:22px;background:#bfe3fb;color:#2a8ebd;"></div>
<div class="a c" style="left:964px;top:368px;width:42px;height:22px;background:#fff;"><svg style="left:15px;top:5px" width="13" height="13" viewBox="0 0 13 13"><rect x="0.6" y="0.6" width="11.8" height="11.8" rx="2" fill="#fff" stroke="#666" stroke-width="1.15"/></svg></div>
<div class="a c r" style="left:1007px;top:368px;width:71px;height:22px;background:#fff;">3,39</div>
<div class="a c" style="left:1079px;top:368px;width:49px;height:22px;background:#f5fcc6;color:#2a8ebd;padding-left:1px;"></div>
<div class="a" style="left:0;top:390px;width:1200px;height:1px;background:#e3e3e3"></div>
<div class="a c" style="left:0px;top:391px;width:200px;height:22px;background:#fff;">АЛЬБОМ Д/РИСОВАНИЯ 40Л АРТ.С</div>
<div class="a c" style="left:201px;top:391px;width:103px;height:22px;background:#fff;">4810833013674</div>
<div class="a c" style="left:305px;top:391px;width:71px;height:22px;background:#fff;">105</div>
<div class="a c" style="left:377px;top:391px;width:25px;height:22px;background:#fff;">пор</div>
<div class="a c" style="left:403px;top:391px;width:103px;height:22px;background:#fff;"></div>
<div class="a c" style="left:507px;top:391px;width:103px;height:22px;background:#fff;">Республика Беларусь</div>
<div class="a c r" style="left:611px;top:391px;width:32px;height:22px;background:#fff;"></div>
<div class="a c" style="left:644px;top:391px;width:51px;height:22px;background:#ffb700;"></div>
<div class="a c" style="left:696px;top:391px;width:71px;height:22px;background:#d3fcd3;"></div>
<div class="a c r" style="left:768px;top:391px;width:47px;height:22px;background:#f5fcc6;color:#2a8ebd;">20</div>
<div class="a c r" style="left:816px;top:391px;width:51px;height:22px;background:#feeeee;">20</div>
<div class="a c r" style="left:868px;top:391px;width:47px;height:22px;background:#cdfccc;color:#2a8ebd;"></div>
<div class="a c r" style="left:916px;top:391px;width:47px;height:22px;background:#bfe3fb;color:#2a8ebd;"></div>
<div class="a c" style="left:964px;top:391px;width:42px;height:22px;background:#fff;"><svg style="left:15px;top:5px" width="13" height="13" viewBox="0 0 13 13"><rect x="0.6" y="0.6" width="11.8" height="11.8" rx="2" fill="#fff" stroke="#666" stroke-width="1.15"/></svg></div>
<div class="a c r" style="left:1007px;top:391px;width:71px;height:22px;background:#fff;">1,85</div>
<div class="a c" style="left:1079px;top:391px;width:49px;height:22px;background:#f5fcc6;color:#2a8ebd;padding-left:1px;"></div>
<div class="a" style="left:0;top:413px;width:1200px;height:1px;background:#e3e3e3"></div>
<div class="a c" style="left:0px;top:414px;width:200px;height:22px;background:#fff;">АЛЬБОМ Д/РИСОВАНИЯ 45Л АРТ.С</div>
<div class="a c" style="left:201px;top:414px;width:103px;height:22px;background:#fff;">4810833013759</div>
<div class="a c" style="left:305px;top:414px;width:71px;height:22px;background:#fff;">107</div>
<div class="a c" style="left:377px;top:414px;width:25px;height:22px;background:#fff;">пор</div>
<div class="a c" style="left:403px;top:414px;width:103px;height:22px;background:#fff;"></div>
<div class="a c" style="left:507px;top:414px;width:103px;height:22px;background:#fff;">Республика Беларусь</div>
<div class="a c r" style="left:611px;top:414px;width:32px;height:22px;background:#fff;"></div>
<div class="a c" style="left:644px;top:414px;width:51px;height:22px;background:#ffb700;"></div>
<div class="a c" style="left:696px;top:414px;width:71px;height:22px;background:#d3fcd3;"></div>
<div class="a c r" style="left:768px;top:414px;width:47px;height:22px;background:#f5fcc6;color:#2a8ebd;">9</div>
<div class="a c r" style="left:816px;top:414px;width:51px;height:22px;background:#feeeee;">9</div>
<div class="a c r" style="left:868px;top:414px;width:47px;height:22px;background:#cdfccc;color:#2a8ebd;"></div>
<div class="a c r" style="left:916px;top:414px;width:47px;height:22px;background:#bfe3fb;color:#2a8ebd;"></div>
<div class="a c" style="left:964px;top:414px;width:42px;height:22px;background:#fff;"><svg style="left:15px;top:5px" width="13" height="13" viewBox="0 0 13 13"><rect x="0.6" y="0.6" width="11.8" height="11.8" rx="2" fill="#fff" stroke="#666" stroke-width="1.15"/></svg></div>
<div class="a c r" style="left:1007px;top:414px;width:71px;height:22px;background:#fff;">1,85</div>
<div class="a c" style="left:1079px;top:414px;width:49px;height:22px;background:#f5fcc6;color:#2a8ebd;padding-left:1px;"></div>
<div class="a" style="left:0;top:436px;width:1200px;height:1px;background:#e3e3e3"></div>
<div class="a c" style="left:0px;top:437px;width:200px;height:22px;background:#d5e4e9;">АНАНАС 1КГ 1000 СОВЕТОВ ДАЧНИКУ</div>
<div class="a c" style="left:201px;top:437px;width:103px;height:22px;background:#d5e4e9;">66742</div>
<div class="a c" style="left:305px;top:437px;width:71px;height:22px;background:#d5e4e9;">124</div>
<div class="a c" style="left:377px;top:437px;width:25px;height:22px;background:#d5e4e9;">кг</div>
<div class="a c" style="left:403px;top:437px;width:103px;height:22px;background:#d5e4e9;"></div>
<div class="a c" style="left:507px;top:437px;width:103px;height:22px;background:#d5e4e9;">Коста-Рика</div>
<div class="a c r" style="left:611px;top:437px;width:32px;height:22px;background:#d5e4e9;"></div>
<div class="a c" style="left:644px;top:437px;width:51px;height:22px;background:#d3c46c;"></div>
<div class="a c" style="left:696px;top:437px;width:71px;height:22px;background:#bee3d2;"></div>
<div class="a c r" style="left:768px;top:437px;width:47px;height:22px;background:#d1e4c9;color:#2a8ebd;">48,028</div>
<div class="a c r" style="left:816px;top:437px;width:51px;height:22px;background:#d6dfe2;">48,028</div>
<div class="a c r" style="left:868px;top:437px;width:47px;height:22px;background:#bde3cd;color:#2a8ebd;"></div>
<div class="a c r" style="left:916px;top:437px;width:47px;height:22px;background:#b5d9ea;color:#2a8ebd;"></div>
<div class="a c" style="left:964px;top:437px;width:42px;height:22px;background:#d5e4e9;"><svg style="left:15px;top:5px" width="13" height="13" viewBox="0 0 13 13"><rect x="0.6" y="0.6" width="11.8" height="11.8" rx="2" fill="#fff" stroke="#666" stroke-width="1.15"/></svg></div>
<div class="a c r" style="left:1007px;top:437px;width:71px;height:22px;background:#d5e4e9;">4,15</div>
<div class="a c" style="left:1079px;top:437px;width:49px;height:22px;background:#d1e4c9;color:#2a8ebd;padding-left:7px;">4</div>
<div class="a" style="left:0;top:459px;width:1200px;height:1px;background:#e3e3e3"></div>
<div class="a c" style="left:0px;top:460px;width:200px;height:22px;background:#fff;">АНАНАС ОК СУШЕНЫЙ 100Г ОК!</div>
<div class="a c" style="left:201px;top:460px;width:103px;height:22px;background:#fff;">4813503000592</div>
<div class="a c" style="left:305px;top:460px;width:71px;height:22px;background:#fff;">133</div>
<div class="a c" style="left:377px;top:460px;width:25px;height:22px;background:#fff;">пор</div>
<div class="a c" style="left:403px;top:460px;width:103px;height:22px;background:#fff;">Vanda Preserved Food</div>
<div class="a c" style="left:507px;top:460px;width:103px;height:22px;background:#fff;">Таиланд</div>
<div class="a c r" style="left:611px;top:460px;width:32px;height:22px;background:#fff;"></div>
<div class="a c" style="left:644px;top:460px;width:51px;height:22px;background:#ffb700;"></div>
<div class="a c" style="left:696px;top:460px;width:71px;height:22px;background:#d3fcd3;"></div>
<div class="a c r" style="left:768px;top:460px;width:47px;height:22px;background:#f5fcc6;color:#2a8ebd;">170</div>
<div class="a c r" style="left:816px;top:460px;width:51px;height:22px;background:#feeeee;">170</div>
<div class="a c r" style="left:868px;top:460px;width:47px;height:22px;background:#cdfccc;color:#2a8ebd;"></div>
<div class="a c r" style="left:916px;top:460px;width:47px;height:22px;background:#bfe3fb;color:#2a8ebd;"></div>
<div class="a c" style="left:964px;top:460px;width:42px;height:22px;background:#fff;"><svg style="left:15px;top:5px" width="13" height="13" viewBox="0 0 13 13"><rect x="0.6" y="0.6" width="11.8" height="11.8" rx="2" fill="#fff" stroke="#666" stroke-width="1.15"/></svg></div>
<div class="a c r" style="left:1007px;top:460px;width:71px;height:22px;background:#fff;">1 299,99</div>
<div class="a c" style="left:1079px;top:460px;width:49px;height:22px;background:#f5fcc6;color:#2a8ebd;padding-left:1px;"></div>
<div class="a" style="left:0;top:482px;width:1200px;height:1px;background:#e3e3e3"></div>
<div class="a c" style="left:0px;top:483px;width:200px;height:22px;background:#fff;">АНАНАСЫ БЕЛЫЙ ПЕЛИКАН СУШ.КУБИКИ</div>
<div class="a c" style="left:201px;top:483px;width:103px;height:22px;background:#fff;">4811028000745</div>
<div class="a c" style="left:305px;top:483px;width:71px;height:22px;background:#fff;">135</div>
<div class="a c" style="left:377px;top:483px;width:25px;height:22px;background:#fff;">пор</div>
<div class="a c" style="left:403px;top:483px;width:103px;height:22px;background:#fff;">GCF INTERNATIONAL</div>
<div class="a c" style="left:507px;top:483px;width:103px;height:22px;background:#fff;">Таиланд</div>
<div class="a c r" style="left:611px;top:483px;width:32px;height:22px;background:#fff;"></div>
<div class="a c" style="left:644px;top:483px;width:51px;height:22px;background:#ffb700;"></div>
<div class="a c" style="left:696px;top:483px;width:71px;height:22px;background:#d3fcd3;"></div>
<div class="a c r" style="left:768px;top:483px;width:47px;height:22px;background:#f5fcc6;color:#2a8ebd;">60</div>
<div class="a c r" style="left:816px;top:483px;width:51px;height:22px;background:#feeeee;">60</div>
<div class="a c r" style="left:868px;top:483px;width:47px;height:22px;background:#cdfccc;color:#2a8ebd;"></div>
<div class="a c r" style="left:916px;top:483px;width:47px;height:22px;background:#bfe3fb;color:#2a8ebd;"></div>
<div class="a c" style="left:964px;top:483px;width:42px;height:22px;background:#fff;"><svg style="left:15px;top:5px" width="13" height="13" viewBox="0 0 13 13"><rect x="0.6" y="0.6" width="11.8" height="11.8" rx="2" fill="#fff" stroke="#666" stroke-width="1.15"/></svg></div>
<div class="a c r" style="left:1007px;top:483px;width:71px;height:22px;background:#fff;">1 469,99</div>
<div class="a c" style="left:1079px;top:483px;width:49px;height:22px;background:#f5fcc6;color:#2a8ebd;padding-left:1px;"></div>
<div class="a" style="left:0;top:505px;width:1200px;height:1px;background:#e3e3e3"></div>
<div class="a c" style="left:0px;top:506px;width:200px;height:22px;background:#fff;">АНАНАСЫ ВЕС.ЛИСТОЧКИ ОРАНЖ.ЦУКАТЫ</div>
<div class="a c" style="left:201px;top:506px;width:103px;height:22px;background:#fff;">62808</div>
<div class="a c" style="left:305px;top:506px;width:71px;height:22px;background:#fff;">137</div>
<div class="a c" style="left:377px;top:506px;width:25px;height:22px;background:#fff;">кг</div>
<div class="a c" style="left:403px;top:506px;width:103px;height:22px;background:#fff;">GCF International Co</div>
<div class="a c" style="left:507px;top:506px;width:103px;height:22px;background:#fff;">Тайланд</div>
<div class="a c r" style="left:611px;top:506px;width:32px;height:22px;background:#fff;"></div>
<div class="a c" style="left:644px;top:506px;width:51px;height:22px;background:#ffb700;"></div>
<div class="a c" style="left:696px;top:506px;width:71px;height:22px;background:#d3fcd3;"></div>
<div class="a c r" style="left:768px;top:506px;width:47px;height:22px;background:#f5fcc6;color:#2a8ebd;">259,856</div>
<div class="a c r" style="left:816px;top:506px;width:51px;height:22px;background:#feeeee;">259,856</div>
<div class="a c r" style="left:868px;top:506px;width:47px;height:22px;background:#cdfccc;color:#2a8ebd;"></div>
<div class="a c r" style="left:916px;top:506px;width:47px;height:22px;background:#bfe3fb;color:#2a8ebd;"></div>
<div class="a c" style="left:964px;top:506px;width:42px;height:22px;background:#fff;"><svg style="left:15px;top:5px" width="13" height="13" viewBox="0 0 13 13"><rect x="0.6" y="0.6" width="11.8" height="11.8" rx="2" fill="#fff" stroke="#666" stroke-width="1.15"/></svg></div>
<div class="a c r" style="left:1007px;top:506px;width:71px;height:22px;background:#fff;">1 629,99</div>
<div class="a c" style="left:1079px;top:506px;width:49px;height:22px;background:#f5fcc6;color:#2a8ebd;padding-left:1px;">25</div>
<div class="a" style="left:0;top:528px;width:1200px;height:1px;background:#e3e3e3"></div>
<div class="a" style="left:200px;top:0;width:1px;height:600px;background:#e3e3e3"></div>
<div class="a" style="left:304px;top:0;width:1px;height:600px;background:#e3e3e3"></div>
<div class="a" style="left:376px;top:0;width:1px;height:600px;background:#e3e3e3"></div>
<div class="a" style="left:402px;top:0;width:1px;height:600px;background:#e3e3e3"></div>
<div class="a" style="left:506px;top:0;width:1px;height:600px;background:#e3e3e3"></div>
<div class="a" style="left:610px;top:0;width:1px;height:600px;background:#e3e3e3"></div>
<div class="a" style="left:643px;top:0;width:1px;height:600px;background:#e3e3e3"></div>
<div class="a" style="left:695px;top:0;width:1px;height:600px;background:#e3e3e3"></div>
<div class="a" style="left:767px;top:0;width:1px;height:600px;background:#e3e3e3"></div>
<div class="a" style="left:815px;top:0;width:1px;height:600px;background:#e3e3e3"></div>
<div class="a" style="left:867px;top:0;width:1px;height:600px;background:#e3e3e3"></div>
<div class="a" style="left:915px;top:0;width:1px;height:600px;background:#e3e3e3"></div>
<div class="a" style="left:963px;top:0;width:1px;height:600px;background:#e3e3e3"></div>
<div class="a" style="left:1006px;top:0;width:1px;height:600px;background:#e3e3e3"></div>
<div class="a" style="left:1078px;top:0;width:1px;height:600px;background:#e3e3e3"></div>
</div>
<svg style="left:972px;top:680px" width="10" height="10" viewBox="0 0 10 10"><path d="M0.5 0.5L9.5 9.5M9.5 0.5L0.5 9.5" stroke="#333" stroke-width="1.2"/></svg>
<div class="a" style="left:986px;top:677px;width:1px;height:16px;background:#c6cfcc"></div>
<div class="a t" style="left:1000px;top:677px;width:36px;text-align:right">12</div>
<div class="a t" style="left:473px;top:202px;width:103px;height:34px;overflow:hidden;text-align:center;color:#111">Штрихкод</div>
<div class="a t" style="left:577px;top:202px;width:71px;height:34px;overflow:hidden;text-align:center;color:#111">Код</div>
<div class="a t" style="left:649px;top:186px;width:25px;height:50px;overflow:hidden;text-align:center;color:#111">Ед.<br>изм<br>.</div>
<div class="a t" style="left:675px;top:202px;width:103px;height:34px;overflow:hidden;text-align:center;color:#111">Производитель</div>
<div class="a t" style="left:779px;top:202px;width:103px;height:34px;overflow:hidden;text-align:center;color:#111">Страна</div>
<div class="a t" style="left:883px;top:183px;width:32px;height:53px;overflow:hidden;text-align:center;color:#111">Кол-<br>во в<br>упак</div>
<div class="a t" style="left:916px;top:183px;width:51px;height:53px;overflow:hidden;text-align:center;color:#111">Кол-во<br>упаково<br>к в</div>
<div class="a t" style="left:968px;top:186px;width:71px;height:50px;overflow:hidden;text-align:center;color:#111">Кол-во<br>товара в<br>документе</div>
<div class="a t" style="left:1040px;top:183px;width:47px;height:53px;overflow:hidden;text-align:center;color:#111">Доступ<br>ное<br>кол-во<br>(...)</div>
<div class="a t" style="left:1088px;top:202px;width:51px;height:34px;overflow:hidden;text-align:center;color:#111">Остаток</div>
<div class="a t" style="left:1140px;top:186px;width:47px;height:50px;overflow:hidden;text-align:center;color:#111">Резерв<br>закупка<br>(всего)</div>
<div class="a t" style="left:1188px;top:183px;width:47px;height:53px;overflow:hidden;text-align:center;color:#111">Резерв<br>продаж<br>а<br>(...)</div>
<div class="a t" style="left:1236px;top:186px;width:42px;height:50px;overflow:hidden;text-align:center;color:#111">Весь<br>остато<br>к</div>
<div class="a t" style="left:1279px;top:202px;width:71px;height:34px;overflow:hidden;text-align:center;color:#111">Цена</div>
<div class="a t" style="left:1355px;top:186px;color:#111">Доступ</div>
<div class="a t" style="left:1358px;top:202px;color:#111">ное</div>
<svg style="left:322px;top:204px" width="12" height="12" viewBox="0 0 12 12"><circle cx="6" cy="6" r="5.3" fill="none" stroke="#40bdf0" stroke-width="1.2"/><path d="M3.6 7.3L6 4.6L8.4 7.3" fill="none" stroke="#333" stroke-width="1.25"/></svg>
<div class="a t" style="left:340px;top:202px;color:#111">Наименование</div>
<div class="a" style="left:472px;top:182px;width:1px;height:54px;background:#e3e3e3"></div>
<div class="a" style="left:576px;top:182px;width:1px;height:54px;background:#e3e3e3"></div>
<div class="a" style="left:648px;top:182px;width:1px;height:54px;background:#e3e3e3"></div>
<div class="a" style="left:674px;top:182px;width:1px;height:54px;background:#e3e3e3"></div>
<div class="a" style="left:778px;top:182px;width:1px;height:54px;background:#e3e3e3"></div>
<div class="a" style="left:882px;top:182px;width:1px;height:54px;background:#e3e3e3"></div>
<div class="a" style="left:915px;top:182px;width:1px;height:54px;background:#e3e3e3"></div>
<div class="a" style="left:967px;top:182px;width:1px;height:54px;background:#e3e3e3"></div>
<div class="a" style="left:1039px;top:182px;width:1px;height:54px;background:#e3e3e3"></div>
<div class="a" style="left:1087px;top:182px;width:1px;height:54px;background:#e3e3e3"></div>
<div class="a" style="left:1139px;top:182px;width:1px;height:54px;background:#e3e3e3"></div>
<div class="a" style="left:1187px;top:182px;width:1px;height:54px;background:#e3e3e3"></div>
<div class="a" style="left:1235px;top:182px;width:1px;height:54px;background:#e3e3e3"></div>
<div class="a" style="left:1278px;top:182px;width:1px;height:54px;background:#e3e3e3"></div>
<div class="a" style="left:1350px;top:182px;width:1px;height:54px;background:#e3e3e3"></div>
<svg style="left:910px;top:231px" width="5" height="5" viewBox="0 0 5 5"><path d="M5 0L5 5L0 5Z" fill="#0e84ba"/></svg>
<svg style="left:962px;top:231px" width="5" height="5" viewBox="0 0 5 5"><path d="M5 0L5 5L0 5Z" fill="#0e84ba"/></svg>
<svg style="left:1034px;top:231px" width="5" height="5" viewBox="0 0 5 5"><path d="M5 0L5 5L0 5Z" fill="#0e84ba"/></svg>
<svg style="left:1082px;top:231px" width="5" height="5" viewBox="0 0 5 5"><path d="M5 0L5 5L0 5Z" fill="#0e84ba"/></svg>
<svg style="left:1182px;top:231px" width="5" height="5" viewBox="0 0 5 5"><path d="M5 0L5 5L0 5Z" fill="#0e84ba"/></svg>
<svg style="left:1230px;top:231px" width="5" height="5" viewBox="0 0 5 5"><path d="M5 0L5 5L0 5Z" fill="#0e84ba"/></svg>
<svg style="left:1273px;top:231px" width="5" height="5" viewBox="0 0 5 5"><path d="M5 0L5 5L0 5Z" fill="#0e84ba"/></svg>
<svg style="left:277px;top:762px" width="6" height="9" viewBox="0 0 6 9"><path d="M5.5 0L0 4.5L5.5 9Z" fill="#cdcdcd"/></svg>
<div class="a" style="left:289px;top:760px;width:1049px;height:13px;background:#d9d9d9"></div>
<div class="a" style="left:974px;top:178px;width:72px;height:591px;border:2px solid #b9004b;border-radius:1px"></div>
<svg style="left:990px;top:640px" width="30" height="35" viewBox="0 0 30 35"><path d="M8 8.2L15.2 22.5" stroke="#c2004c" stroke-width="3.6" stroke-linecap="round"/><path d="M12.3 25.3L20.4 20.8L19.2 29Z" fill="#c2004c" stroke="#c2004c" stroke-width="1.6" stroke-linejoin="round"/></svg>
<div class="a" style="left:271px;top:783px;width:28px;height:22px;background:#d6e5eb;border-radius:4px"></div>
<svg style="left:276px;top:786px" width="18" height="16" viewBox="0 0 18 16"><circle cx="3" cy="2.8" r="1.8" fill="none" stroke="#3dbbf0" stroke-width="1.1"/><circle cx="3" cy="7.8" r="1.8" fill="none" stroke="#3dbbf0" stroke-width="1.1"/><circle cx="3" cy="12.9" r="1.8" fill="none" stroke="#3dbbf0" stroke-width="1.1"/><path d="M7.4 3.2h9.4M7.4 8.3h9.4M7.4 13.3h9.4" stroke="#222" stroke-width="1.1"/></svg>
<svg style="left:304px;top:785px" width="18" height="18" viewBox="0 0 18 18"><rect x="1.2" y="1.2" width="15.6" height="15.6" rx="1.2" fill="#f8f8f8" stroke="#222" stroke-width="1.2"/><path d="M6.6 1.5v15M11.5 1.5v15M1.5 6.3h15M1.5 11.3h15" stroke="#3dbbf0" stroke-width="1.1"/></svg>
<svg style="left:337px;top:787px" width="17" height="15" viewBox="0 0 17 15"><path d="M0.5 1.4h15.3" stroke="#222" stroke-width="1.1"/><path d="M2.2 5.3h11.4" stroke="#3dbbf0" stroke-width="1.1"/><path d="M4.7 9.4h6.7" stroke="#222" stroke-width="1.1"/><path d="M6.2 13.4h3.5" stroke="#3dbbf0" stroke-width="1.1"/></svg>
<svg style="left:369px;top:786px" width="16" height="16" viewBox="0 0 16 16"><path d="M6.7 0.9h2.6l0.5 2.2 1.6 0.9 2.1-0.7 1.3 2.2-1.6 1.5v1.8l1.6 1.5-1.3 2.2-2.1-0.7-1.6 0.9-0.5 2.2H6.7l-0.5-2.2-1.6-0.9-2.1 0.7-1.3-2.2 1.6-1.5V7.2L1.2 5.7l1.3-2.2 2.1 0.7 1.6-0.9Z" fill="none" stroke="#222" stroke-width="1.1" stroke-linejoin="round"/><circle cx="8" cy="8" r="2.6" fill="none" stroke="#3dbbf0" stroke-width="1.3"/></svg>
<svg style="left:401px;top:786px" width="17" height="16" viewBox="0 0 17 16"><path d="M2.3 0.6v3.6M1.3 1.5l1-0.9" fill="none" stroke="#3dbbf0" stroke-width="0.9"/><path d="M1.2 6.6c0.3-0.8 2.2-0.8 2.1 0.3c0 0.7-2.1 1.9-2.1 2.6h2.2" fill="none" stroke="#3dbbf0" stroke-width="0.9"/><path d="M1.2 11.4h2l-1 1.2c1 0 1.3 0.6 1.1 1.3c-0.3 0.9-1.8 0.8-2.1 0.2" fill="none" stroke="#3dbbf0" stroke-width="0.9"/><path d="M6.5 2.4h9.2M6.5 8.3h9.2M6.5 14.3h9.2" stroke="#222" stroke-width="1.1"/></svg>
<svg style="left:429px;top:786px" width="17" height="16" viewBox="0 0 17 16"><path d="M0.4 1.1h15.3M0.4 5.2h15.3M0.4 9.2h5.7M0.4 13.5h5.7" stroke="#222" stroke-width="1.1"/><path d="M12.5 8.3v6.6M9.2 11.6h6.6" stroke="#3dbbf0" stroke-width="1.2"/></svg>
<svg style="left:460px;top:785px" width="18" height="18" viewBox="0 0 18 18"><path d="M6.5 4H2.9c-0.9 0-1.4 0.5-1.4 1.4v9.4c0 0.9 0.5 1.4 1.4 1.4h9.6c0.9 0 1.4-0.5 1.4-1.4V11" fill="none" stroke="#666" stroke-width="1.6"/><path d="M8 9.3L16 1.3" stroke="#3dbbf0" stroke-width="1.2"/><path d="M10.8 1.3h5.2v5.2" fill="none" stroke="#8fd6f5" stroke-width="1.6"/></svg>
<svg style="left:492px;top:785px" width="18" height="18" viewBox="0 0 18 18"><path d="M1.3 13.6V4.1H11.9" fill="none" stroke="#222" stroke-width="1.2"/><path d="M9.1 1.2L11.9 4.1L9.1 7" fill="none" stroke="#222" stroke-width="1.2"/><path d="M15.1 4.1H16.8V13.6H6.5" fill="none" stroke="#3dbbf0" stroke-width="1.2"/><path d="M9.3 10.8L6.5 13.6L9.3 16.4" fill="none" stroke="#3dbbf0" stroke-width="1.2"/></svg>
<svg style="left:918px;top:787px" width="13" height="13" viewBox="0 0 13 13"><rect x="0" y="0" width="13" height="13" rx="2" fill="#1a7ef5"/><path d="M2.8 6.8L5.3 9.3L10.3 3.5" fill="none" stroke="#fff" stroke-width="1.8"/></svg>
<div class="a t" style="left:933px;top:788px;">Активные</div>
<div class="a" style="left:993px;top:782px;width:122px;height:24px;background:#fff;border:1px solid #cfcfcf;border-radius:3px"></div>
<div class="a t" style="left:1001px;top:787px;"><span style="letter-spacing:-0.75px">С остатком (F10)</span></div>
<svg style="left:1100px;top:791px" width="11" height="7" viewBox="0 0 11 7"><path d="M1 1.2L5.2 5.4L9.4 1.2" fill="none" stroke="#111" stroke-width="2"/></svg>
<div class="a" style="left:1123px;top:782px;width:120px;height:24px;background:#fff;border:1px solid #cfcfcf;border-radius:3px"></div>
<div class="a t" style="left:1131px;top:787px;">(Все)</div>
<svg style="left:1228px;top:791px" width="11" height="7" viewBox="0 0 11 7"><path d="M1 1.2L5.2 5.4L9.4 1.2" fill="none" stroke="#111" stroke-width="2"/></svg>
<div class="a" style="left:1249px;top:783px;width:101px;height:23px;background:#fff;border:1px solid #cfcfcf;border-radius:4px"></div>
<svg style="left:1265px;top:788px" width="11" height="11" viewBox="0 0 11 11"><path d="M5.5 0v10M0.5 5h10" stroke="#444" stroke-width="1.6"/></svg>
<div class="a t" style="left:1282px;top:787px;">Добавить</div>
<div class="a" style="left:1354px;top:783px;width:20px;height:23px;background:#fff;border:1px solid #cfcfcf;border-radius:4px"></div>
</body></html>
